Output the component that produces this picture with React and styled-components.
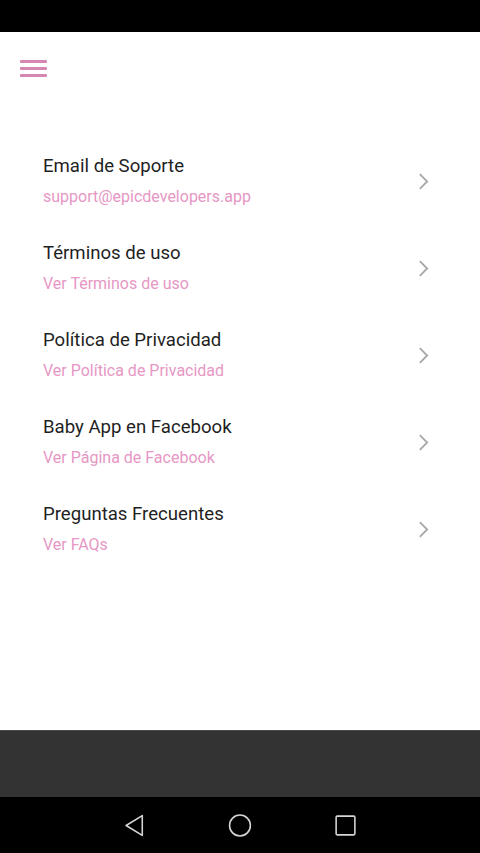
import React from 'react';
import styled, { createGlobalStyle } from 'styled-components';

const GlobalStyle = createGlobalStyle`
    html, body {
        margin: 0;
        padding: 0;
        background: #000;
    }
    body {
        font-family: Roboto, "Noto Sans", sans-serif;
    }
`;

const items = [
    { title: 'Email de Soporte', sub: 'support@epicdevelopers.app' },
    { title: 'Términos de uso', sub: 'Ver Términos de uso' },
    { title: 'Política de Privacidad', sub: 'Ver Política de Privacidad' },
    { title: 'Baby App en Facebook', sub: 'Ver Página de Facebook' },
    { title: 'Preguntas Frecuentes', sub: 'Ver FAQs' },
];

const App = () => {
    return (
        <Screen>
            <GlobalStyle />
            <StatusBar />
            <Content>
                <Header>
                    <MenuButton aria-label="menu">
                        <span /><span /><span />
                    </MenuButton>
                </Header>
                <List>
                    {items.map(item => (
                        <Row key={item.title}>
                            <Texts>
                                <Title>{item.title}</Title>
                                <Sub>{item.sub}</Sub>
                            </Texts>
                            <Chevron viewBox="0 0 12 20">
                                <path d="M2 2 L10 10 L2 18" fill="none" stroke="#a8a8a8" strokeWidth="2" />
                            </Chevron>
                        </Row>
                    ))}
                </List>
            </Content>
            <BottomBar />
            <NavBar>
                <NavIcon viewBox="0 0 24 24">
                    <path d="M18.5 2.5 L3 12 L18.5 21.5 Z" fill="none" stroke="#d6d6d6" strokeWidth="1.5" strokeLinejoin="round" />
                </NavIcon>
                <NavIcon viewBox="0 0 24 24">
                    <circle cx="11.5" cy="12" r="10" fill="none" stroke="#d6d6d6" strokeWidth="1.5" />
                </NavIcon>
                <NavIcon viewBox="0 0 24 24">
                    <rect x="3" y="3" width="18" height="18" rx="1" fill="none" stroke="#d6d6d6" strokeWidth="1.5" />
                </NavIcon>
            </NavBar>
        </Screen>
    );
};

export default App;

const Screen = styled.div`
    width: 480px;
    height: 853px;
    display: flex;
    flex-direction: column;
    background: #000;
    overflow: hidden;
`;

const StatusBar = styled.div`
    height: 32px;
    background: #000;
    flex-shrink: 0;
`;

const Content = styled.div`
    height: 698px;
    background: #fff;
    flex-shrink: 0;
`;

const Header = styled.div`
    height: 73px;
    display: flex;
    align-items: center;
    padding-left: 20px;
`;

const MenuButton = styled.button`
    width: 27px;
    height: 17px;
    border: 0;
    padding: 0;
    background: none;
    display: flex;
    flex-direction: column;
    justify-content: space-between;

    span {
        display: block;
        height: 3px;
        border-radius: 1px;
        background: #d587b2;
    }
`;

const List = styled.div`
    display: flex;
    flex-direction: column;
    padding-top: 50px;
`;

const Row = styled.div`
    height: 87px;
    display: flex;
    align-items: flex-start;
    padding: 0 51px 0 43px;
`;

const Texts = styled.div`
    flex: 1;
    display: flex;
    flex-direction: column;
`;

const Title = styled.div`
    font-size: 18.6px;
    line-height: 22px;
    color: #1f1f1f;
`;

const Sub = styled.div`
    margin-top: 9px;
    font-size: 16px;
    line-height: 22px;
    color: #e697c4;
`;

const Chevron = styled.svg`
    width: 11px;
    height: 19px;
    margin-top: 17px;
`;

const BottomBar = styled.div`
    height: 67px;
    background: #333333;
    border-top: 1px solid #4a4a4a;
    box-sizing: border-box;
    flex-shrink: 0;
`;

const NavBar = styled.div`
    height: 56px;
    background: #000;
    display: flex;
    justify-content: center;
    align-items: center;
    gap: 80px;
    flex-shrink: 0;
`;

const NavIcon = styled.svg`
    width: 25px;
    height: 25px;
`;
